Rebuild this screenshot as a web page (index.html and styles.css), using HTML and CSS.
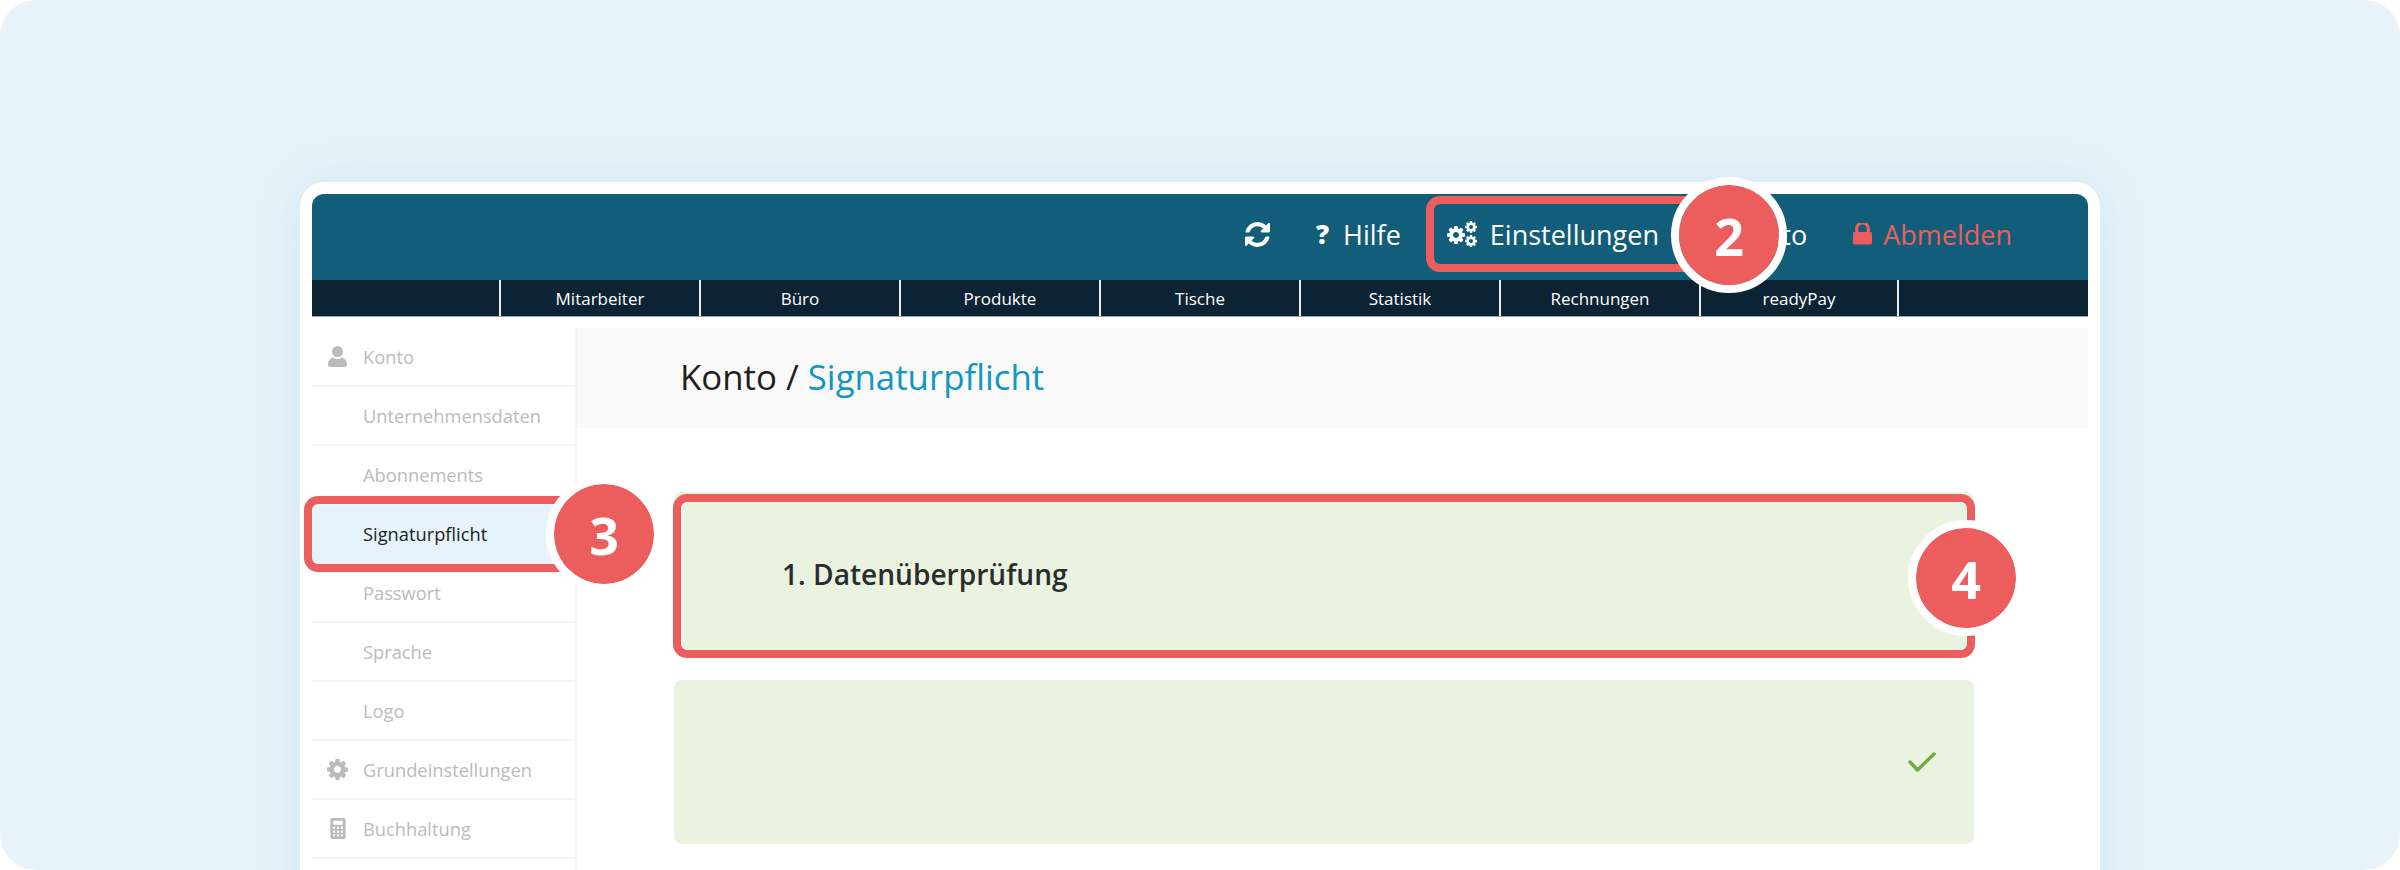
FILE: index.html
```html
<!DOCTYPE html>
<html lang="de">
<head>
<meta charset="utf-8">
<title>Konto / Signaturpflicht</title>
<link rel="stylesheet" href="styles.css">
</head>
<body>
<svg class="defs" aria-hidden="true">
  <symbol id="cog" viewBox="128 128 1536 1536"><path d="M1152 896q0-106-75-181t-181-75-181 75-75 181 75 181 181 75 181-75 75-181zm512-109v222q0 12-8 23t-20 13l-185 28q-19 54-39 91 35 50 107 138 10 12 10 25t-9 23q-27 37-99 108t-94 71q-12 0-26-9l-138-108q-44 23-91 38-16 136-29 186-7 28-36 28h-222q-14 0-24.500-8.500t-11.500-21.500l-28-184q-49-16-90-37l-141 107q-10 9-25 9-14 0-25-11-126-114-165-168-7-10-7-23 0-12 8-23 15-21 51-66.500t54-70.500q-27-50-41-99l-183-27q-13-2-21-12.500t-8-23.500v-222q0-12 8-23t19-13l186-28q14-46 39-92-40-57-107-138-10-12-10-24 0-10 9-23 26-36 98.500-107.500t94.500-71.500q13 0 26 10l138 107q44-23 91-38 16-136 29-186 7-28 36-28h222q14 0 24.500 8.500t11.500 21.500l28 184q49 16 90 37l142-107q9-9 24-9 13 0 25 10 129 119 165 170 7 8 7 22 0 12-8 23-15 21-51 66.500t-54 70.500q26 50 41 98l183 28q13 2 21 12.500t8 23.500z"/></symbol>
  <symbol id="user" viewBox="0 0 19 21"><circle cx="9.500" cy="5.500" r="5.500"/><path d="M0 18c0-3 2-5.500 5-6.500 1.500 1 3 1.500 4.500 1.500s3-.5 4.500-1.500c3 1 5 3.500 5 6.500v1c0 1-1 2-2 2H2c-1 0-2-1-2-2z"/></symbol>
</svg>
<main class="stage">
  <div class="frame">
    <header class="topbar">
      <div class="top-item">
        <svg class="ico-sync" viewBox="128 128 1536 1536"><path d="M1639 1056q0 5-1 7-64 268-268 434.500t-478 166.500q-146 0-282.500-55t-252.500-157l-129 129q-19 19-45 19t-45-19-19-45v-448q0-26 19-45t45-19h448q26 0 45 19t19 45-19 45l-137 137q71 66 161 102t187 36q134 0 250-65t186-179q11-17 53-117 8-23 30-23h192q13 0 22.500 9.500t9.500 22.500zm25-800v448q0 26-19 45t-45 19h-448q-26 0-45-19t-19-45 19-45l138-138q-148-137-349-137-134 0-250 65t-186 179q-11 17-53 117-8 23-30 23h-199q-13 0-22.500-9.500t-9.500-22.500v-7q65-268 270-434.500t480-166.500q146 0 284 55.500t245 156.500l130-129q19-19 45-19t45 19 19 45z"/></svg>
      </div>
      <div class="top-item"><span class="qmark">?</span><span>Hilfe</span></div>
      <div class="top-item">
        <svg class="ico-cogs" viewBox="0 0 30 26">
          <use href="#cog" x="0" y="5" width="18" height="18"/>
          <use href="#cog" x="18" y="0" width="12" height="12"/>
          <use href="#cog" x="18" y="14" width="12" height="12"/>
        </svg>
        <span>Einstellungen</span>
      </div>
      <div class="top-item"><svg class="ico-top-user"><use href="#user"/></svg><span>Konto</span></div>
      <div class="top-item logout">
        <svg class="ico-lock" viewBox="320 256 1152 1280"><path d="M640 768h512v-192q0-106-75-181t-181-75-181 75-75 181v192zm832 96v576q0 40-28 68t-68 28h-960q-40 0-68-28t-28-68v-576q0-40 28-68t68-28h32v-192q0-184 132-316t316-132 316 132 132 316v192h32q40 0 68 28t28 68z"/></svg>
        <span>Abmelden</span>
      </div>
    </header>
    <nav class="subnav">
      <a class="sub-item">Mitarbeiter</a>
      <a class="sub-item">Büro</a>
      <a class="sub-item">Produkte</a>
      <a class="sub-item">Tische</a>
      <a class="sub-item">Statistik</a>
      <a class="sub-item">Rechnungen</a>
      <a class="sub-item sub-last">readyPay</a>
    </nav>
    <div class="content">
      <aside class="sidebar">
        <div class="row"><span class="slot"><svg class="ico-side-user"><use href="#user"/></svg></span>Konto</div>
        <div class="row"><span class="slot"></span>Unternehmensdaten</div>
        <div class="row"><span class="slot"></span>Abonnements</div>
        <div class="row active"><span class="slot"></span>Signaturpflicht</div>
        <div class="row"><span class="slot"></span>Passwort</div>
        <div class="row"><span class="slot"></span>Sprache</div>
        <div class="row"><span class="slot"></span>Logo</div>
        <div class="row"><span class="slot"><svg class="ico-side-cog"><use href="#cog"/></svg></span>Grundeinstellungen</div>
        <div class="row"><span class="slot">
          <svg class="ico-calc" viewBox="0 0 16 22"><path fill-rule="evenodd" d="M2 0h12a2 2 0 0 1 2 2v18a2 2 0 0 1-2 2H2a2 2 0 0 1-2-2V2a2 2 0 0 1 2-2zM3 3v4h10V3zM3 9v2.500h2V9zm4 0v2.500h2V9zm4 0v2.500h2V9zM3 13v2.500h2V13zm4 0v2.500h2V13zm4 0v2.500h2V13zM3 17v2.500h2V17zm4 0v2.500h2V17zm4 0v2.500h2V17z"/></svg>
        </span>Buchhaltung</div>
        <div class="row"></div>
      </aside>
      <section class="main">
        <h1 class="title">Konto / <span class="title-accent">Signaturpflicht</span></h1>
        <div class="cards">
          <div class="card"><h2 class="card-title">1. Datenüberprüfung</h2></div>
          <div class="card card-check">
            <svg class="ico-check" viewBox="0 0 28 20"><path d="M2 10l7.500 8L26 2"/></svg>
          </div>
        </div>
      </section>
    </div>
  </div>

  <div class="mark mark-2"></div>
  <div class="mark mark-3"></div>
  <div class="mark mark-4"></div>
  <div class="badge badge-2">2</div>
  <div class="badge badge-3">3</div>
  <div class="badge badge-4">4</div>
</main>
</body>
</html>
```
FILE: styles.css
```css
* { box-sizing: border-box; }
html, body { margin: 0; padding: 0; background: #fff; }
body { width: 2400px; height: 870px; overflow: hidden; font-family: "Open Sans", "Noto Sans", sans-serif; }
.defs { position: absolute; width: 0; height: 0; }

.stage {
  position: relative;
  width: 2400px;
  height: 870px;
  padding: 182px 300px 0;
  background: #e7f3f9;
  border-radius: 36px;
  overflow: hidden;
}
.frame {
  height: 800px;
  padding: 12px;
  background: #fff;
  border-radius: 24px;
  box-shadow: 0 0 50px #cfe7f1;
}

.topbar {
  display: flex;
  justify-content: flex-end;
  align-items: center;
  gap: 46px;
  height: 86px;
  padding: 0 76px 6px 0;
  background: #125d7a;
  border-radius: 12px 12px 0 0;
  color: #fff;
  font-size: 27px;
}
.top-item { display: flex; align-items: center; gap: 13px; }
.ico-sync { width: 25px; height: 25px; fill: #fff; }
.qmark { width: 14px; font-weight: 800; font-size: 26px; }
.ico-cogs { width: 30px; height: 26px; fill: #fff; }
.ico-top-user { width: 14px; height: 20px; fill: #fff; }
.logout { color: #ec5d5d; gap: 11px; }
.ico-lock { width: 19px; height: 22px; fill: #ec5d5d; }

.subnav {
  display: flex;
  height: 37px;
  padding-left: 187px;
  background: #0c2333;
  border-bottom: 1px solid #9aa5ab;
}
.sub-item {
  width: 200px;
  border-left: 2px solid #e8edf0;
  color: #fff;
  font-size: 17px;
  line-height: 37px;
  text-align: center;
}
.sub-last { border-right: 2px solid #e8edf0; }

.content { display: flex; padding-top: 11px; }
.sidebar {
  width: 265px;
  flex: none;
  border-right: 2px solid #f4f4f4;
}
.row {
  display: flex;
  align-items: center;
  height: 59px;
  border-bottom: 2px solid #f4f4f4;
  color: #bbb;
  font-size: 18.300px;
  font-weight: 500;
}
.row.active { background: #e7f3fa; color: #1c2226; }
.slot { display: flex; justify-content: center; align-items: center; width: 51px; }
.ico-side-user { width: 19px; height: 21px; fill: #bbb; }
.ico-side-cog { width: 21px; height: 21px; fill: #bbb; }
.ico-calc { width: 16px; height: 21px; fill: #bbb; }

.main { flex: 1; }
.title {
  margin: 0;
  height: 100px;
  padding-left: 103px;
  background: #f9f9f9;
  color: #1e1e1e;
  font-size: 34.800px;
  font-weight: 400;
  line-height: 98px;
}
.title-accent { color: #1296c4; }

.cards {
  display: flex;
  flex-direction: column;
  gap: 24px;
  padding: 64px 114px 0 97px;
}
.card {
  display: flex;
  align-items: center;
  height: 164px;
  padding-left: 108px;
  background: #eaf3df;
  border-radius: 8px;
}
.card-title { margin: 0; color: #2a2d2e; font-size: 28.100px; font-weight: 600; }
.card-check { justify-content: flex-end; padding: 0 38px 0 0; }
.ico-check { width: 28px; height: 20px; fill: none; stroke: #72ac40; stroke-width: 3.500; stroke-linecap: round; stroke-linejoin: round; }

.mark { position: absolute; border: 8px solid #ec5d5d; border-radius: 14px; }
.mark-2 { left: 1426px; top: 196px; width: 280px; height: 76px; }
.mark-3 { left: 304px; top: 496px; width: 270px; height: 76px; }
.mark-4 { left: 673px; top: 494px; width: 1302px; height: 164px; }

.badge {
  position: absolute;
  display: flex;
  justify-content: center;
  align-items: center;
  width: 116px;
  height: 116px;
  background: #ec5d5d;
  background-clip: padding-box;
  border: 8px solid #fff;
  border-radius: 50%;
  color: #fff;
  font-size: 52px;
  font-weight: 700;
}
.badge-2 { left: 1671px; top: 177px; }
.badge-3 { left: 546px; top: 476px; }
.badge-4 { left: 1908px; top: 520px; }
```
